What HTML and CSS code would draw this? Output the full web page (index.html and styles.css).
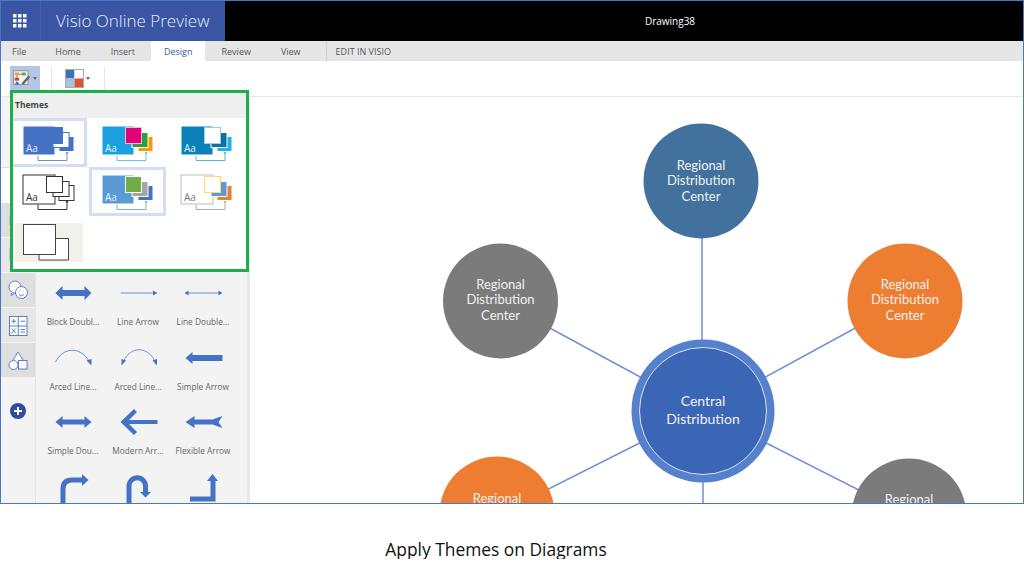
FILE: index.html
```html
<!DOCTYPE html>
<html lang="en">
<head>
    <meta charset="UTF-8">
    <meta name="viewport" content="width=device-width, initial-scale=1.0">
    <title>Apply Themes on Diagrams</title>
    <link rel="stylesheet" href="styles.css">
</head>
<body>

    <!-- shared drawing for the theme thumbnails, colours come from the t-* classes -->
    <svg class="defs" width="0" height="0">
        <symbol id="theme-art" viewBox="0 0 77 49">
            <g transform="translate(13 8)">
                <path class="link" d="M15 29.5V34.500H44V27"/>
                <path class="head" d="M42.500 27.500h3l-1.500-3z"/>
                <rect class="big" x="0" y="0" width="32" height="29"/>
                <rect class="back" x="36" y="10.500" width="15" height="15"/>
                <rect class="mid" x="30" y="6.500" width="16" height="15"/>
                <rect class="top" x="23.500" y="1.500" width="16" height="16"/>
            </g>
        </symbol>
    </svg>

    <div class="window">
        <header class="topbar">
            <div class="brand">
                <div class="waffle">
                    <svg width="14" height="14" viewBox="0 0 14 14" fill="#fff">
                        <rect x="0" y="0" width="3.500" height="3.500"/><rect x="5" y="0" width="3.500" height="3.500"/><rect x="10" y="0" width="3.500" height="3.500"/>
                        <rect x="0" y="5" width="3.500" height="3.500"/><rect x="5" y="5" width="3.500" height="3.500"/><rect x="10" y="5" width="3.500" height="3.500"/>
                        <rect x="0" y="10" width="3.500" height="3.500"/><rect x="5" y="10" width="3.500" height="3.500"/><rect x="10" y="10" width="3.500" height="3.500"/>
                    </svg>
                </div>
                <div class="app-name">Visio Online Preview</div>
            </div>
            <div class="doc-name">Drawing38</div>
        </header>

        <nav class="tabs">
            <div class="tab tab-file">File</div>
            <div class="tab tab-home">Home</div>
            <div class="tab tab-insert">Insert</div>
            <div class="tab tab-active">Design</div>
            <div class="tab tab-review">Review</div>
            <div class="tab tab-view">View</div>
            <div class="tab tab-edit">EDIT IN VISIO</div>
        </nav>

        <div class="toolbar">
            <button class="tool tool-on">
                <svg width="21" height="19" viewBox="0 0 21 19">
                    <rect x="0.500" y="0.500" width="17" height="16" fill="#f4f4f4" stroke="#8a8a8a"/>
                    <rect x="2" y="2.500" width="5" height="3.500" fill="#f0a030"/>
                    <rect x="10" y="2.500" width="5" height="3.500" fill="#6aa84f"/>
                    <rect x="2" y="8.500" width="5" height="3.500" fill="#d9442a"/>
                    <path d="M4.500 12.500l-2.500 4h6z" fill="#3c78c0"/>
                    <path d="M7 4.500h3M4.500 6v2.500" stroke="#777" fill="none"/>
                    <path d="M10 15l8-9 2 2-8 9z" fill="#666"/>
                </svg>
                <span class="caret"></span>
            </button>
            <div class="tool-sep"></div>
            <button class="tool tool-palette">
                <svg width="19" height="19" viewBox="0 0 19 19">
                    <rect x="1" y="1" width="8.500" height="8.500" fill="#3d74b8"/>
                    <rect x="9.500" y="1" width="8.500" height="8.500" fill="#fff"/>
                    <rect x="1" y="9.500" width="8.500" height="8.500" fill="#a5c3dd"/>
                    <rect x="9.500" y="9.500" width="8.500" height="8.500" fill="#e0532d"/>
                    <rect x="0.500" y="0.500" width="18" height="18" fill="none" stroke="#aaa"/>
                </svg>
                <span class="caret"></span>
            </button>
            <div class="tool-sep"></div>
        </div>

        <div class="main">
            <aside class="rail">
                <div class="rail-blank"></div>
                <!-- these two tiles are mostly behind the dropdown -->
                <div class="rail-tile">
                    <svg width="34" height="34" viewBox="0 0 34 34" class="rail-icon rail-icon-faint">
                        <rect x="8.500" y="13.500" width="8" height="8"/>
                    </svg>
                </div>
                <div class="rail-tile rail-tile-light">
                    <svg width="34" height="34" viewBox="0 0 34 34" class="rail-icon rail-icon-faint">
                        <rect x="8.500" y="10.500" width="8" height="12"/>
                    </svg>
                </div>
                <div class="rail-tile">
                    <svg width="34" height="34" viewBox="0 0 34 34" class="rail-icon">
                        <circle cx="14" cy="14" r="6"/>
                        <path d="M11 19.500l-1 3 4-2.500"/>
                        <circle cx="20.500" cy="19.500" r="6"/>
                        <path d="M18 21.500q2.500 2.500 5 0M18.500 18h.5M22 18h.5"/>
                    </svg>
                </div>
                <div class="rail-tile rail-tile-light">
                    <svg width="34" height="34" viewBox="0 0 34 34" class="rail-icon">
                        <rect x="8.500" y="8.500" width="17.500" height="19"/>
                        <path d="M17.250 8.500v19M8.500 18h17.500M10.500 13.250h4.500M12.750 11v4.500M19.500 13.250h4.500M10.750 20.500l4 4.500M14.750 20.500l-4 4.500M19.500 21.500h4.500M19.500 24h4.500"/>
                    </svg>
                </div>
                <div class="rail-tile">
                    <svg width="34" height="34" viewBox="0 0 34 34" class="rail-icon">
                        <path d="M17 9l-7 11h14z"/>
                        <circle cx="12.500" cy="22" r="4.500"/>
                        <rect x="17.500" y="17.500" width="8.500" height="8.500"/>
                    </svg>
                </div>
                <div class="rail-add">
                    <svg width="16" height="16" viewBox="0 0 16 16">
                        <circle cx="8" cy="8" r="8" fill="#2f4b9f"/>
                        <path d="M8 4v8M4 8h8" stroke="#fff" stroke-width="2"/>
                    </svg>
                </div>
            </aside>

            <section class="stencil">
                <div class="shape">
                    <svg class="shape-art" viewBox="0 0 65 36"><path d="M14.500 18l7-7v4h22v-4l7 7-7 7v-4h-22v4z"/></svg>
                    <div class="shape-name">Block Doubl...</div>
                </div>
                <div class="shape">
                    <svg class="shape-art" viewBox="0 0 65 36"><path class="wire" d="M14.500 18h33"/><path d="M47 15.500l4.500 2.500-4.500 2.500z"/></svg>
                    <div class="shape-name">Line Arrow</div>
                </div>
                <div class="shape">
                    <svg class="shape-art" viewBox="0 0 65 36"><path class="wire" d="M17 18h31"/><path d="M47.500 15.500l4 2.500-4 2.500zM17.500 15.500l-4 2.500 4 2.500z"/></svg>
                    <div class="shape-name">Line Double...</div>
                </div>
                <div class="shape">
                    <svg class="shape-art" viewBox="0 0 65 36"><path class="wire" d="M14.500 22C22 7 39 6 48 21"/><path d="M45.500 20.500l5-1.500v6.500z"/></svg>
                    <div class="shape-name">Arced Line...</div>
                </div>
                <div class="shape">
                    <svg class="shape-art" viewBox="0 0 65 36"><path class="wire" d="M17.500 21C25 6 41 6 49 21"/><path d="M46.500 20.500l4.500-1.500v6.500zM20 20.500l-4.500-1.500v6.500z"/></svg>
                    <div class="shape-name">Arced Line...</div>
                </div>
                <div class="shape">
                    <svg class="shape-art" viewBox="0 0 65 36"><path d="M14.500 18l7-6v3h30v6h-30v3z"/></svg>
                    <div class="shape-name">Simple Arrow</div>
                </div>
                <div class="shape">
                    <svg class="shape-art" viewBox="0 0 65 36"><path d="M14.500 18l7-6v3.500h22V12l7 6-7 6v-3.500h-22V24z"/></svg>
                    <div class="shape-name">Simple Dou...</div>
                </div>
                <div class="shape">
                    <svg class="shape-art" viewBox="0 0 65 36"><path d="M14.500 18L28 5l3 3-8 8h28.500v4H23l8 8-3 3z"/></svg>
                    <div class="shape-name">Modern Arr...</div>
                </div>
                <div class="shape">
                    <svg class="shape-art" viewBox="0 0 65 36"><path d="M14.500 18l9-6v3.500h18l10-3.500-4 6 4 6-10-3.500h-18V24z"/></svg>
                    <div class="shape-name">Flexible Arrow</div>
                </div>
                <div class="shape">
                    <svg class="shape-art" viewBox="0 0 65 36"><path class="bar" d="M22 36V20q0-9 9-9h10"/><path d="M41 5l6.500 6-6.500 6z"/></svg>
                </div>
                <div class="shape">
                    <svg class="shape-art" viewBox="0 0 65 36"><path class="bar" d="M23 36V17a8.250 8.250 0 0 1 16.500 0v7"/><path d="M34 23h11l-5.500 5.500z"/></svg>
                </div>
                <div class="shape">
                    <svg class="shape-art" viewBox="0 0 65 36"><path class="bar" d="M19 30h23V12"/><path d="M36 12l5.500-7 5.500 7z"/></svg>
                </div>
            </section>

            <div class="canvas">
                <svg class="diagram" width="773" height="406" viewBox="250 97 773 406">
                    <path class="spoke" d="M702 411V181M703 411L500 301M703 411L905 301M703 411L497 515M703 411L910 516M703 411V520"/>

                    <circle cx="701" cy="181" r="57.500" fill="#41719c"/>
                    <text class="node" x="701" y="170">Regional</text>
                    <text class="node" x="701" y="185">Distribution</text>
                    <text class="node" x="701" y="201">Center</text>

                    <circle cx="500.500" cy="301" r="57.500" fill="#7b7b7b"/>
                    <text class="node" x="500.500" y="289">Regional</text>
                    <text class="node" x="500.500" y="304">Distribution</text>
                    <text class="node" x="500.500" y="320">Center</text>

                    <circle cx="905" cy="301" r="57.500" fill="#ed7d31"/>
                    <text class="node" x="905" y="289">Regional</text>
                    <text class="node" x="905" y="304">Distribution</text>
                    <text class="node" x="905" y="320">Center</text>

                    <circle cx="497" cy="514" r="57.500" fill="#ed7d31"/>
                    <text class="node" x="497" y="503">Regional</text>

                    <circle cx="909" cy="516" r="57.500" fill="#7b7b7b"/>
                    <text class="node" x="909" y="504">Regional</text>

                    <circle cx="703" cy="411" r="71.500" fill="#5580cb"/>
                    <circle cx="703" cy="411" r="63.500" fill="#3b66b6" stroke="#dbe3f3" stroke-width="1"/>
                    <text class="node node-big" x="703" y="406">Central</text>
                    <text class="node node-big" x="703" y="424">Distribution</text>
                </svg>
            </div>
        </div>

        <!-- themes dropdown, sits over the stencil -->
        <div class="themes">
            <div class="themes-title">Themes</div>
            <div class="themes-grid">
                <div class="theme selected t-blue"><svg width="71" height="43" viewBox="3 3 71 43"><use href="#theme-art" width="77" height="49"/><text class="aa" x="16" y="34">Aa</text></svg></div>
                <div class="theme t-bright"><svg width="77" height="49"><use href="#theme-art" width="77" height="49"/><text class="aa" x="16" y="34">Aa</text></svg></div>
                <div class="theme t-teal"><svg width="77" height="49"><use href="#theme-art" width="77" height="49"/><text class="aa" x="16" y="34">Aa</text></svg></div>
                <div class="theme t-line"><svg width="77" height="49"><use href="#theme-art" width="77" height="49"/><text class="aa" x="16" y="34">Aa</text></svg></div>
                <div class="theme selected t-soft"><svg width="71" height="43" viewBox="3 3 71 43"><use href="#theme-art" width="77" height="49"/><text class="aa" x="16" y="34">Aa</text></svg></div>
                <div class="theme t-pale"><svg width="77" height="49"><use href="#theme-art" width="77" height="49"/><text class="aa" x="16" y="34">Aa</text></svg></div>
                <div class="theme">
                    <svg width="77" height="49" viewBox="0 0 77 49">
                        <rect x="5" y="7" width="68" height="39" fill="#f1f0e9"/>
                        <path d="M45 22.500H58.500V44H29V37" fill="#fff" stroke="#444" stroke-width="1"/>
                        <rect x="13.500" y="8.500" width="32" height="30" fill="#fff" stroke="#444" stroke-width="1"/>
                    </svg>
                </div>
            </div>
        </div>
    </div>

    <p class="caption">Apply Themes on Diagrams</p>

</body>
</html>
```

FILE: styles.css
```css
body {
    margin: 0;
    background-color: #fff;
    font-family: "Open Sans", sans-serif;
}
.defs {
    position: absolute;
}
.window {
    position: relative;
    box-sizing: border-box;
    height: 504px;
    border: 1px solid #4a76c6;
    overflow: hidden;
    display: flex;
    flex-direction: column;
}

/* top bar */
.topbar {
    display: flex;
    height: 40px;
    flex-shrink: 0;
    background-color: #000;
}
.brand {
    display: flex;
    width: 224px;
    background-color: #3955a3;
}
.waffle {
    display: flex;
    align-items: center;
    justify-content: center;
    width: 39px;
    border-right: 1px solid #4561ad;
}
.waffle svg {
    margin-right: 2px;
}
.app-name {
    margin-left: 15px;
    font-size: 17px;
    font-weight: 300;
    line-height: 40px;
    color: #e8ecf6;
}
.doc-name {
    flex: 1;
    padding-left: 92px;
    text-align: center;
    font-size: 10px;
    line-height: 41px;
    color: #fff;
}

/* tabs */
.tabs {
    display: flex;
    height: 20px;
    flex-shrink: 0;
    background-color: #e6e6e6;
    font-size: 9px;
    line-height: 21px;
    color: #555;
}
.tab-file { margin-left: 11px; }
.tab-home { margin-left: 29px; }
.tab-insert { margin-left: 30px; }
.tab-active {
    margin-left: 16px;
    padding: 0 12px 0 13px;
    background-color: #fff;
    color: #3955a3;
}
.tab-review { margin-left: 17px; }
.tab-view { margin-left: 30px; }
.tab-edit {
    margin-left: 25px;
    padding-left: 9px;
    border-left: 1px solid #ccc;
}

/* ribbon */
.toolbar {
    display: flex;
    align-items: center;
    height: 35px;
    flex-shrink: 0;
    padding-left: 9px;
    border-bottom: 1px solid #e6e6e6;
}
.tool {
    display: flex;
    align-items: center;
    gap: 2px;
    height: 25px;
    padding: 0 3px;
    border: none;
    background: none;
}
.tool-on {
    width: 30px;
    background-color: #b4c5e6;
}
.tool-palette {
    margin-left: 10px;
}
.tool-sep {
    width: 1px;
    height: 24px;
    margin-left: 11px;
    background-color: #e3e3e3;
}
.caret {
    border-left: 2.500px solid transparent;
    border-right: 2.500px solid transparent;
    border-top: 3px solid #666;
}

/* left side */
.main {
    display: flex;
    flex: 1;
    min-height: 0;
}
.rail {
    width: 34px;
    padding-top: 70px;
    flex-shrink: 0;
    background-color: #f3f3f3;
    border-right: 1px solid #e6e6e6;
}
.rail-blank {
    height: 35px;
    border-top: 1px solid #e2e2e2;
    background-color: #fff;
}
.rail-tile {
    height: 34px;
    margin-bottom: 1px;
    background-color: #dfdfdf;
}
.rail-tile-light {
    background-color: #e6e6e6;
}
.rail-icon {
    display: block;
    fill: #fff;
    stroke: #5d7dc9;
    stroke-width: 1;
}
.rail-icon-faint {
    stroke: #b4c2e4;
}
.rail-add {
    display: flex;
    justify-content: center;
    padding-top: 25px;
}
.stencil {
    display: grid;
    grid-template-columns: repeat(3, 65px);
    grid-auto-rows: 64.500px;
    align-content: start;
    width: 195px;
    padding: 178px 11.500px 0 4.500px;
    flex-shrink: 0;
    background-color: #f3f3f3;
    border-right: 3px solid #e8e8e8;
}
.shape {
    text-align: center;
}
.shape-art {
    display: block;
    width: 65px;
    height: 36px;
    fill: #4472c4;
    overflow: visible;
}
.wire {
    fill: none;
    stroke: #6f8fd2;
    stroke-width: 1;
}
.bar {
    fill: none;
    stroke: #4472c4;
    stroke-width: 5;
}
.shape-name {
    margin-top: 5px;
    font-size: 8.300px;
    line-height: 12px;
    white-space: nowrap;
    color: #666;
}

/* diagram */
.canvas {
    flex: 1;
    min-width: 0;
    background-color: #fff;
}
.diagram {
    display: block;
}
.spoke {
    fill: none;
    stroke: #6c8fd3;
    stroke-width: 1.500;
}
.node {
    font-family: Lato, sans-serif;
    font-size: 13px;
    text-anchor: middle;
    fill: #f1f1f1;
}
.node-big {
    font-size: 14px;
}

/* themes dropdown */
.themes {
    position: absolute;
    left: 9px;
    top: 89px;
    box-sizing: border-box;
    width: 239px;
    height: 182px;
    border: 3px solid #1fae4b;
    background-color: #fff;
    overflow: hidden;
}
.themes-title {
    height: 25px;
    padding-left: 2px;
    background-color: #efefef;
    font-size: 8.500px;
    font-weight: 700;
    line-height: 24px;
    color: #444;
}
.themes-grid {
    display: grid;
    grid-template-columns: repeat(3, 77px);
    grid-auto-rows: 49px;
    column-gap: 2px;
    margin-left: -3px;
}
.theme svg {
    display: block;
}
.selected {
    box-sizing: border-box;
    border: 3px solid #d3ddf4;
}

/* thumbnail colours */
.big { fill: var(--big); stroke: var(--big-line); stroke-width: 1; }
.top { fill: var(--top); stroke: var(--top-line); stroke-width: 1; }
.mid { fill: var(--mid); stroke: var(--mid-line); stroke-width: 1; }
.back { fill: var(--back); stroke: var(--back-line); stroke-width: 1; }
.link { fill: none; stroke: var(--link); stroke-width: 1; }
.head { fill: var(--link); }
.aa {
    font-size: 10px;
    fill: var(--aa);
}
.t-blue {
    --big: #4472c4; --big-line: #fff;
    --top: #4472c4; --top-line: #4472c4;
    --mid: #fff; --mid-line: #4472c4;
    --back: #4472c4; --back-line: #fff;
    --link: #6f8fd2; --aa: #e4e9f6;
}
.t-bright {
    --big: #1ba1e2; --big-line: #fff;
    --top: #e3007b; --top-line: #e8c0d8;
    --mid: #2e9e3f; --mid-line: #fff;
    --back: #f59d00; --back-line: #fff;
    --link: #6fc0ea; --aa: #e4f3fb;
}
.t-teal {
    --big: #0a80b8; --big-line: #fff;
    --top: #fff; --top-line: #9fcbe0;
    --mid: #0f6f9f; --mid-line: #fff;
    --back: #1db3e8; --back-line: #fff;
    --link: #5bb0d8; --aa: #e0f0f8;
}
.t-line {
    --big: #fff; --big-line: #333;
    --top: #fff; --top-line: #333;
    --mid: #fff; --mid-line: #333;
    --back: #fff; --back-line: #333;
    --link: #333; --aa: #333;
}
.t-soft {
    --big: #5b9bd5; --big-line: #fff;
    --top: #70ad47; --top-line: #fff;
    --mid: #a5a5a5; --mid-line: #fff;
    --back: #4472c4; --back-line: #fff;
    --link: #7cb0e0; --aa: #e6f0fa;
}
.t-pale {
    --big: #fff; --big-line: #bbb;
    --top: #fff; --top-line: #ffd966;
    --mid: #5b9bd5; --mid-line: #fff;
    --back: #ed7d31; --back-line: #fff;
    --link: #aaa; --aa: #777;
}

.caption {
    margin: 0;
    padding: 35px 32px 0 0;
    text-align: center;
    font-size: 17.400px;
    line-height: 20px;
    color: #111;
}
```
